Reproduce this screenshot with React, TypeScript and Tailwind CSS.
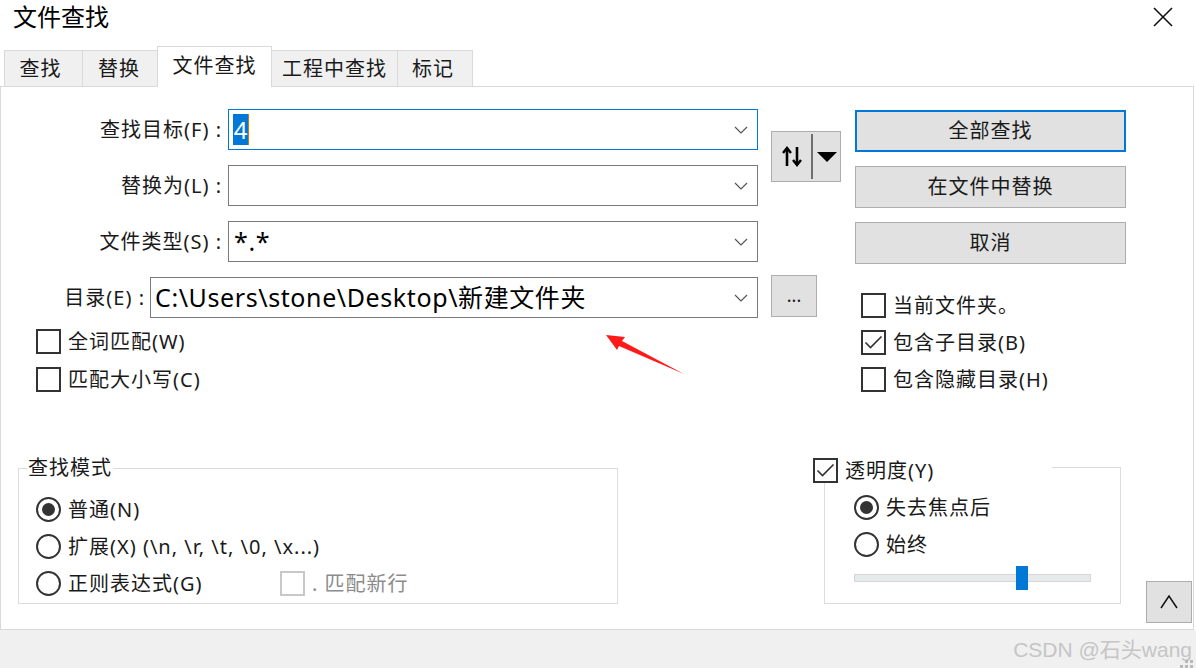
import React from "react";

const F = "font-['Noto_Sans','Noto_Sans_CJK_SC',sans-serif]";

function Chevron() {
  return (
    <svg width="14" height="8" viewBox="0 0 14 8" className="shrink-0">
      <polyline points="1,1 7,7 13,1" fill="none" stroke="#555" strokeWidth="1.2" />
    </svg>
  );
}

function Combo({ className, focused, children }: { className: string; focused?: boolean; children?: React.ReactNode }) {
  return (
    <div
      className={`h-[41px] flex items-center bg-white border ${focused ? "border-[#0078d7]" : "border-[#7a7a7a]"} pl-[4px] pr-[9px] ${className}`}
    >
      <div className="flex-1 flex items-center min-w-0 text-[25px] tracking-[0.6px] text-black">{children}</div>
      <Chevron />
    </div>
  );
}

function Check({ checked, disabled, label }: { checked?: boolean; disabled?: boolean; label: string }) {
  return (
    <div className="flex items-center h-[25px]">
      <div
        className={`w-[25px] h-[25px] shrink-0 border-2 ${disabled ? "border-[#c8c8c8]" : "border-[#333]"} bg-white flex items-center justify-center`}
      >
        {checked && (
          <svg width="19" height="15" viewBox="0 0 19 15">
            <polyline points="1.5,7.5 6.5,12.5 17.5,1.5" fill="none" stroke="#333" strokeWidth="1.6" />
          </svg>
        )}
      </div>
      <span
        className={`ml-[7px] text-[20px] leading-[25px] tracking-[1px] whitespace-nowrap ${
          disabled ? "text-[#8c8c8c]" : "text-[#1a1a1a]"
        }`}
      >
        {label}
      </span>
    </div>
  );
}

function Radio({ checked, label }: { checked?: boolean; label: string }) {
  return (
    <div className="flex items-center h-[25px]">
      <div className="w-[25px] h-[25px] shrink-0 rounded-full border-2 border-[#333] bg-white flex items-center justify-center">
        {checked && <div className="w-[13px] h-[13px] rounded-full bg-[#333]" />}
      </div>
      <span className="ml-[7px] text-[20px] leading-[25px] tracking-[1px] whitespace-nowrap text-[#1a1a1a]">{label}</span>
    </div>
  );
}

function Btn({ label, focused }: { label: string; focused?: boolean }) {
  return (
    <div
      className={`h-[42px] w-[271px] bg-[#e1e1e1] flex items-center justify-center text-[20px] text-[#1a1a1a] tracking-[1px] ${
        focused ? "border-2 border-[#0078d7]" : "border border-[#adadad]"
      }`}
    >
      {label}
    </div>
  );
}

export default function App() {
  return (
    <div className={`relative w-[1196px] h-[668px] overflow-hidden bg-white text-[#1a1a1a] ${F}`}>
      {/* title bar */}
      <div className="h-[46px] flex items-start justify-between">
        <div className="pl-[13px] h-[34px] leading-[34px] text-[24px] text-black">文件查找</div>
        <div className="w-[20px] h-[20px] mt-[7px] mr-[23px]">
          <svg width="20" height="20" viewBox="0 0 20 20">
            <line x1="1" y1="1" x2="19" y2="19" stroke="#111" strokeWidth="1.6" />
            <line x1="19" y1="1" x2="1" y2="19" stroke="#111" strokeWidth="1.6" />
          </svg>
        </div>
      </div>

      {/* tabs */}
      <div className="relative z-10 h-[41px] -mb-px flex items-end pl-[4px] text-[20px] tracking-[1px] text-[#1a1a1a]">
        <div className="w-[78px] h-[36px] mb-px bg-[#f0f0f0] border-l border-t border-[#d9d9d9] flex items-center justify-center pr-[6px]">查找</div>
        <div className="w-[75px] h-[36px] mb-px bg-[#f0f0f0] border-l border-t border-[#d9d9d9] flex items-center justify-center pr-[2px]">替换</div>
        <div className="w-[115px] h-[41px] bg-white border-l border-t border-r border-[#d9d9d9] flex items-center justify-center pb-[2px]">文件查找</div>
        <div className="w-[125px] h-[36px] mb-px bg-[#f0f0f0] border-t border-[#d9d9d9] flex items-center justify-center">工程中查找</div>
        <div className="w-[76px] h-[36px] mb-px bg-[#f0f0f0] border-l border-t border-r border-[#d9d9d9] flex items-center justify-center pr-[4px]">标记</div>
      </div>

      {/* panel */}
      <div className="w-[1194px] h-[544px] border border-[#d9d9d9] bg-white flex flex-col">
        {/* top section */}
        <div className="h-[371px] flex">
          {/* left block */}
          <div className="w-[757px] flex flex-col">
            <div className="pt-[22px] flex flex-col gap-[15px] text-[20px] tracking-[1px]">
              <div className="flex items-center justify-end gap-[6px]">
                <span className="whitespace-nowrap">查找目标(F) :</span>
                <Combo className="w-[530px]" focused>
                  <span className="inline-block h-[31px] w-[15px] leading-[31px] bg-[#0078d7] text-white text-center text-[24px] tracking-normal">4</span>
                  <span className="inline-block h-[31px] w-[1px] bg-[#d07800]" />
                </Combo>
              </div>
              <div className="flex items-center justify-end gap-[6px]">
                <span className="whitespace-nowrap">替换为(L) :</span>
                <Combo className="w-[530px]" />
              </div>
              <div className="flex items-center justify-end gap-[6px]">
                <span className="whitespace-nowrap">文件类型(S) :</span>
                <Combo className="w-[530px]">
                  <span className="pl-[1px]">*.*</span>
                </Combo>
              </div>
              <div className="flex items-center justify-end gap-[5px]">
                <span className="whitespace-nowrap">目录(E) :</span>
                <Combo className="w-[608px]">
                  <span className="whitespace-nowrap">C:\Users\stone\Desktop\新建文件夹</span>
                </Combo>
              </div>
            </div>
            <div className="mt-[11px] pl-[35px] flex flex-col gap-[13px]">
              <Check label="全词匹配(W)" />
              <Check label="匹配大小写(C)" />
            </div>
          </div>

          {/* middle column */}
          <div className="ml-[13px] w-[70px] flex flex-col">
            <div className="mt-[44px] w-[70px] h-[51px] bg-[#e1e1e1] border border-[#adadad] flex items-center">
              <div className="w-[39px] flex items-center justify-center">
                <svg width="20" height="21" viewBox="0 0 20 21">
                  <line x1="5" y1="3" x2="5" y2="20" stroke="#000" strokeWidth="2.6" />
                  <polyline points="1,7 5,2 9,7" fill="none" stroke="#000" strokeWidth="2.4" />
                  <line x1="15" y1="1" x2="15" y2="18" stroke="#000" strokeWidth="2.6" />
                  <polyline points="11,14 15,19 19,14" fill="none" stroke="#000" strokeWidth="2.4" />
                </svg>
              </div>
              <div className="w-[2px] h-[45px] bg-[#6f6f6f]" />
              <div className="flex-1 flex items-center justify-center pl-[1px]">
                <svg width="20" height="10" viewBox="0 0 20 10">
                  <polygon points="0,0 20,0 10,10" fill="#000" />
                </svg>
              </div>
            </div>
            <div className="mt-[93px] w-[46px] h-[42px] bg-[#e1e1e1] border border-[#adadad] flex items-center justify-center text-[18px] leading-none pb-[2px]">
              ...
            </div>
          </div>

          {/* right column */}
          <div className="ml-[14px] w-[271px] pt-[23px] flex flex-col">
            <div className="flex flex-col gap-[14px]">
              <Btn label="全部查找" focused />
              <Btn label="在文件中替换" />
              <Btn label="取消" />
            </div>
            <div className="mt-[29px] pl-[6px] flex flex-col gap-[12px]">
              <Check label="当前文件夹。" />
              <Check label="包含子目录(B)" checked />
              <Check label="包含隐藏目录(H)" />
            </div>
          </div>
        </div>

        {/* bottom section */}
        <div className="flex items-start">
          <fieldset className="ml-[17px] w-[600px] h-[146px] border border-[#dcdcdc]">
            <legend className="ml-[8px] px-[1px] text-[20px] leading-[20px] tracking-[1px] text-[#1a1a1a]">查找模式</legend>
            <div className="mt-[19px] pl-[17px] flex flex-col gap-[12px]">
              <Radio checked label="普通(N)" />
              <Radio label="扩展(X) (\n, \r, \t, \0, \x...)" />
              <div className="flex items-center">
                <div className="w-[244px]">
                  <Radio label="正则表达式(G)" />
                </div>
                <Check disabled label=". 匹配新行" />
              </div>
            </div>
          </fieldset>

          <div className="ml-[195px] w-[308px] flex flex-col">
            <div className="h-[25px] flex">
              <div className="w-[239px]">
                <Check checked label="透明度(Y)" />
              </div>
              <div className="flex-1 mt-[9px] h-[16px] border-t border-r border-[#dcdcdc]" />
            </div>
            <div className="ml-[11px] w-[297px] h-[121px] border-l border-r border-b border-[#dcdcdc] pl-[29px] pt-[12px] flex flex-col">
              <div className="flex flex-col gap-[12px]">
                <Radio checked label="失去焦点后" />
                <Radio label="始终" />
              </div>
              <div className="relative mt-[9px] w-[237px] h-[24px]">
                <div className="absolute left-0 right-0 top-[8px] h-[8px] bg-[#e7eaea] border border-[#d6d6d6]" />
                <div className="absolute left-[162px] top-0 w-[12px] h-[24px] bg-[#0078d7]" />
              </div>
            </div>
          </div>

          <div className="ml-[25px] mt-[123px] w-[46px] h-[42px] bg-[#e1e1e1] border border-[#adadad] flex items-center justify-center">
            <svg width="18" height="14" viewBox="0 0 18 14">
              <polyline points="1,13 9,1 17,13" fill="none" stroke="#111" strokeWidth="1.5" />
            </svg>
          </div>
        </div>
      </div>

      {/* bottom strip */}
      <div className="relative h-[38px] bg-[#f0f0f0] flex items-center justify-end pr-[4px]">
        <span className="text-[21px] leading-none text-[#c5c5c5] font-['Liberation_Sans','Noto_Sans_CJK_SC',sans-serif] whitespace-nowrap">
          CSDN @石头wang
        </span>
        <div className="absolute right-[3px] bottom-0 flex flex-col items-end gap-[2px]">
          <div className="flex gap-[2px]">
            <div className="w-[3px] h-[3px] bg-[#b8b8b8]" />
            <div className="w-[3px] h-[3px] bg-[#b8b8b8]" />
          </div>
          <div className="flex gap-[2px]">
            <div className="w-[3px] h-[3px] bg-[#b8b8b8]" />
            <div className="w-[3px] h-[3px] bg-[#b8b8b8]" />
            <div className="w-[3px] h-[3px] bg-[#b8b8b8]" />
          </div>
        </div>
      </div>

      {/* red annotation arrow */}
      <svg className="absolute left-0 top-0 pointer-events-none" width="1196" height="668" viewBox="0 0 1196 668">
        <polygon points="606,335 625,337 622,341 684,374 619,346 617,350" fill="#ff1a1a" />
      </svg>
    </div>
  );
}
